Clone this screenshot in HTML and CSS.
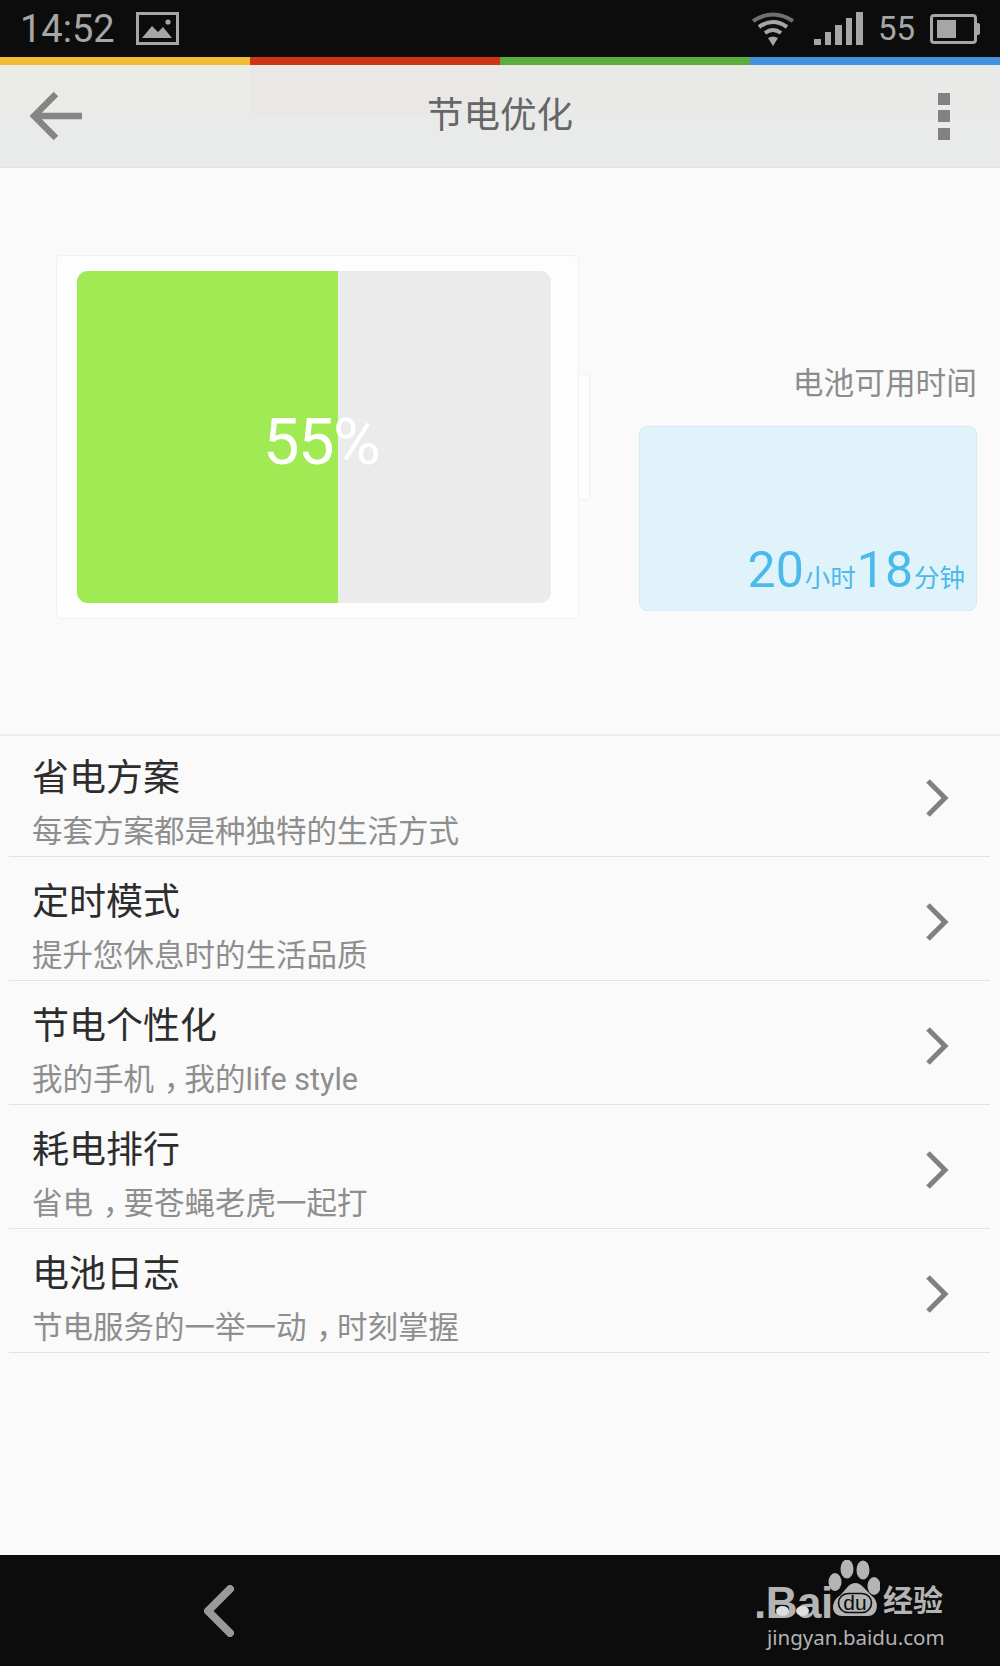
FILE: index.html
```html
<!DOCTYPE html>
<html>
<head>
  <meta charset="UTF-8">
  <title>节电优化</title>
  <link rel="stylesheet" href="styles.css">
</head>
<body>
<div class="phone">

  <div class="statusbar">
    <span class="clock">14:52</span>
    <svg class="pic-icon" width="43" height="33" viewBox="0 0 43 33">
      <rect x="1.5" y="1.5" width="40" height="30" fill="none" stroke="#a6a6a6" stroke-width="3"/>
      <path d="M6 26 L16 14 L22 20 L27 15 L36 26 Z" fill="#a6a6a6"/>
      <circle cx="32" cy="10" r="2.6" fill="#a6a6a6"/>
    </svg>
    <div class="status-right">
      <svg class="wifi-icon" width="44" height="35" viewBox="0 0 44 35" fill="none">
        <path d="M2 10 Q22 -3 42 10" stroke="#6f6f6f" stroke-width="4"/>
        <path d="M8 16 Q22 6 36 16" stroke="#a6a6a6" stroke-width="4"/>
        <path d="M14 22 Q22 16 30 22" stroke="#a6a6a6" stroke-width="4"/>
        <path d="M17 27 Q22 24 27 27 L22 35 Z" fill="#a6a6a6"/>
      </svg>
      <div class="signal">
        <i class="bar1"></i><i class="bar2"></i><i class="bar3"></i><i class="bar4"></i><i class="bar5"></i>
      </div>
      <span class="level">55</span>
      <div class="mini-batt">
        <div class="mini-fill"></div>
      </div>
      <div class="mini-tip"></div>
    </div>
  </div>

  <div class="stripe">
    <div class="s-yellow"></div>
    <div class="s-red"></div>
    <div class="s-green"></div>
    <div class="s-blue"></div>
  </div>

  <div class="appbar">
    <svg width="52" height="50" viewBox="0 0 52 50" fill="none">
      <path d="M26 3 L4 25 L26 47 M4 25 H52" stroke="#858585" stroke-width="6.5"/>
    </svg>
    <div class="appbar-title">节电优化</div>
    <div class="menu"><i></i><i></i><i></i></div>
  </div>

  <div class="hero">
    <div class="battery">
      <div class="shell">
        <div class="cell">
          <div class="charge"></div>
          <span class="percent">55%</span>
        </div>
      </div>
      <div class="nub"></div>
    </div>
    <div class="remain">
      <div class="remain-label">电池可用时间</div>
      <div class="remain-card">
        <span class="big">20</span><span class="unit">小时</span><span class="big">18</span><span class="unit">分钟</span>
      </div>
    </div>
  </div>

  <div class="list">
    <div class="row">
      <div class="row-text">
        <div class="row-title">省电方案</div>
        <div class="row-sub">每套方案都是种独特的生活方式</div>
      </div>
      <svg class="chev" width="24" height="38" viewBox="0 0 24 38" fill="none"><path d="M3 2 L20 19 L3 36" stroke="#808080" stroke-width="5"/></svg>
    </div>
    <div class="row">
      <div class="row-text">
        <div class="row-title">定时模式</div>
        <div class="row-sub">提升您休息时的生活品质</div>
      </div>
      <svg class="chev" width="24" height="38" viewBox="0 0 24 38" fill="none"><path d="M3 2 L20 19 L3 36" stroke="#808080" stroke-width="5"/></svg>
    </div>
    <div class="row">
      <div class="row-text">
        <div class="row-title">节电个性化</div>
        <div class="row-sub">我的手机<span class="comma">，</span>我的life style</div>
      </div>
      <svg class="chev" width="24" height="38" viewBox="0 0 24 38" fill="none"><path d="M3 2 L20 19 L3 36" stroke="#808080" stroke-width="5"/></svg>
    </div>
    <div class="row">
      <div class="row-text">
        <div class="row-title">耗电排行</div>
        <div class="row-sub">省电<span class="comma">，</span>要苍蝇老虎一起打</div>
      </div>
      <svg class="chev" width="24" height="38" viewBox="0 0 24 38" fill="none"><path d="M3 2 L20 19 L3 36" stroke="#808080" stroke-width="5"/></svg>
    </div>
    <div class="row">
      <div class="row-text">
        <div class="row-title">电池日志</div>
        <div class="row-sub">节电服务的一举一动<span class="comma">，</span>时刻掌握</div>
      </div>
      <svg class="chev" width="24" height="38" viewBox="0 0 24 38" fill="none"><path d="M3 2 L20 19 L3 36" stroke="#808080" stroke-width="5"/></svg>
    </div>
  </div>

  <div class="navbar">
    <svg class="nav-back" width="30" height="52" viewBox="0 0 30 52" fill="none">
      <path d="M26 4 L4 26 L26 48" stroke="#999999" stroke-width="8" stroke-linecap="round" stroke-linejoin="round"/>
    </svg>
  </div>

  <div class="watermark">
    <div class="wm-top">
      <span class="wm-bai">.Bai</span>
      <svg class="wm-paw" width="52" height="56" viewBox="0 0 52 56">
        <ellipse cx="7" cy="22" rx="6.5" ry="9" fill="#b4b4b4"/>
        <ellipse cx="19" cy="9" rx="6.5" ry="9.5" fill="#b4b4b4"/>
        <ellipse cx="35" cy="10" rx="6.5" ry="9.5" fill="#b4b4b4"/>
        <ellipse cx="46" cy="26" rx="6.5" ry="9" fill="#b4b4b4"/>
        <path d="M27 23 C34 23 38 31 44 36 C52 42 50 56 40 56 L14 56 C4 56 2 44 10 37 C17 32 20 23 27 23 Z" fill="#b4b4b4"/>
        <rect x="10.5" y="33.5" width="33" height="19" rx="9.5" fill="none" stroke="#0c0c0c" stroke-width="1.6"/>
        <text x="27" y="50" text-anchor="middle" class="wm-du">du</text>
      </svg>
      <span class="wm-cn">经验</span>
    </div>
    <div class="wm-url">jingyan.baidu.com</div>
    <span class="wm-glint glint-a"></span>
    <span class="wm-glint glint-b"></span>
  </div>

</div>
</body>
</html>
```

FILE: styles.css
```css
* {
  box-sizing: border-box;
}

html,
body {
  margin: 0;
  padding: 0;
}

.phone {
  position: relative;
  display: flex;
  flex-direction: column;
  width: 1000px;
  height: 1666px;
  overflow: hidden;
  background: #fafafa;
  font-family: Roboto, "Noto Sans CJK SC", sans-serif;
}

/* status bar */
.statusbar {
  display: flex;
  align-items: center;
  height: 57px;
  padding: 0 20px 0 20px;
  background: #0c0c0c;
  color: #a6a6a6;
}

.clock {
  font-size: 38px;
}

.pic-icon {
  margin-left: 21px;
}

.status-right {
  display: flex;
  align-items: center;
  margin-left: auto;
}

.signal {
  display: flex;
  align-items: flex-end;
  gap: 4px;
  height: 33px;
  margin-left: 19px;
}

.signal i {
  display: block;
  width: 6.5px;
  background: #a6a6a6;
}

.bar1 { height: 6px; }
.bar2 { height: 13px; }
.bar3 { height: 20px; }
.bar4 { height: 27px; }
.bar5 { height: 33px; }

.level {
  margin-left: 15px;
  font-size: 33px;
}

.mini-batt {
  display: flex;
  align-items: center;
  width: 47px;
  height: 30px;
  margin-left: 15px;
  padding-left: 4px;
  border: 3px solid #a6a6a6;
  border-radius: 4px;
}

.mini-fill {
  width: 19px;
  height: 18px;
  background: #a6a6a6;
}

.mini-tip {
  width: 3px;
  height: 12px;
  background: #a6a6a6;
  border-radius: 0 2px 2px 0;
}

/* colored line */
.stripe {
  display: flex;
  height: 8px;
}

.stripe div {
  flex: 1;
}

.s-yellow { background: #efbc34; }
.s-red { background: #cf3416; }
.s-green { background: #5bae3b; }
.s-blue { background: #4290de; }

/* app bar */
.appbar {
  display: flex;
  align-items: center;
  height: 103px;
  padding: 0 50px 0 30px;
  background:
    linear-gradient(90deg, #ebebe8 0, #ebebe8 250px, #e9e8e7 250px, #e9e8e7 500px, #e9eae8 500px) top left / 100% 50px no-repeat,
    #e9eaea;
  border-bottom: 1px solid #e3e3e3;
}

.appbar-title {
  flex: 1;
  padding: 0 20px 7px 0;
  text-align: center;
  font-size: 36.5px;
  color: #666666;
}

.menu {
  display: flex;
  flex-direction: column;
  gap: 5.5px;
}

.menu i {
  display: block;
  width: 12px;
  height: 12px;
  background: #828282;
}

/* battery part */
.hero {
  display: flex;
  align-items: flex-start;
  height: 568px;
  padding: 87px 0 0 56px;
  border-bottom: 2px solid #efefef;
}

.battery {
  display: flex;
  align-items: center;
}

.shell {
  width: 523px;
  height: 364px;
  padding: 15px 27px 15px 20px;
  background: #fdfdfd;
  border: 1px solid #f1f1f1;
  border-radius: 5px;
}

.cell {
  position: relative;
  height: 100%;
  overflow: hidden;
  background: #ebebeb;
  border-radius: 11px;
}

.charge {
  width: 261px;
  height: 100%;
  background: #a0ea53;
}

.percent {
  position: absolute;
  left: 186px;
  top: 133px;
  font-size: 65px;
  line-height: 76px;
  letter-spacing: -1.5px;
  color: #ffffff;
}

.nub {
  width: 11px;
  height: 126px;
  background: #fdfdfd;
  border: 1px solid #f1f1f1;
  border-left: 0;
  border-radius: 0 4px 4px 0;
}

.remain {
  width: 338px;
  margin: 109px 0 0 49px;
}

.remain-label {
  height: 40px;
  line-height: 40px;
  text-align: right;
  font-size: 30.7px;
  color: #8c8c8c;
}

.remain-card {
  display: flex;
  align-items: baseline;
  justify-content: flex-end;
  height: 185px;
  margin-top: 22px;
  padding: 113px 10px 0 0;
  background: #e0f2fa;
  border: 1px solid #d3ebf7;
  border-radius: 8px;
  color: #4ab9ec;
}

.big {
  font-size: 50px;
  line-height: 60px;
}

.unit {
  margin: 0 1px 0 1px;
  font-size: 25.5px;
}

/* rows */
.list {
  display: flex;
  flex-direction: column;
  margin-top: -3px;
  padding: 0 10px 0 9px;
}

.row {
  display: flex;
  align-items: center;
  justify-content: space-between;
  height: 124px;
  padding: 0 41px 0 23px;
  border-bottom: 1px solid #e2e2e2;
}

.row-text {
  padding-top: 18px;
}

.row-title {
  font-size: 37px;
  line-height: 48px;
  color: #2d2d2d;
}

.row-sub {
  margin-top: 8px;
  font-size: 30.5px;
  line-height: 42px;
  color: #8e8e8e;
}

/* comma sits in the middle of its square here */
.comma {
  padding: 0 0.18em 0 0.32em;
  font-feature-settings: "halt";
}

.chev {
  margin-top: 6px;
}

/* bottom bar */
.navbar {
  display: flex;
  align-items: center;
  height: 111px;
  margin-top: auto;
  padding: 0 0 0 204px;
  background: #0c0c0c;
}

/* logo stamped over the bar */
.watermark {
  position: absolute;
  left: 754px;
  top: 1560px;
  width: 202px;
  color: #b4b4b4;
}

.wm-top {
  display: flex;
  align-items: flex-end;
  height: 56px;
}

.wm-bai {
  width: 74px;
  font-family: "Liberation Sans", sans-serif;
  font-size: 44px;
  font-weight: 700;
  line-height: 26px;
  letter-spacing: -0.5px;
}

.wm-du {
  font-family: "Liberation Sans", sans-serif;
  font-size: 21px;
  fill: #0c0c0c;
}

.wm-cn {
  margin-left: 3px;
  font-size: 30px;
  font-weight: 700;
  line-height: 30px;
}

.wm-url {
  margin: 7px 0 0 13px;
  font-family: "Noto Sans", sans-serif;
  font-size: 20.5px;
  line-height: 28px;
}

.wm-glint {
  position: absolute;
  top: 46px;
  width: 13px;
  height: 10px;
  background: #dedede;
  border-radius: 50%;
}

.glint-a { left: 22px; }
.glint-b { left: 42px; }
```
